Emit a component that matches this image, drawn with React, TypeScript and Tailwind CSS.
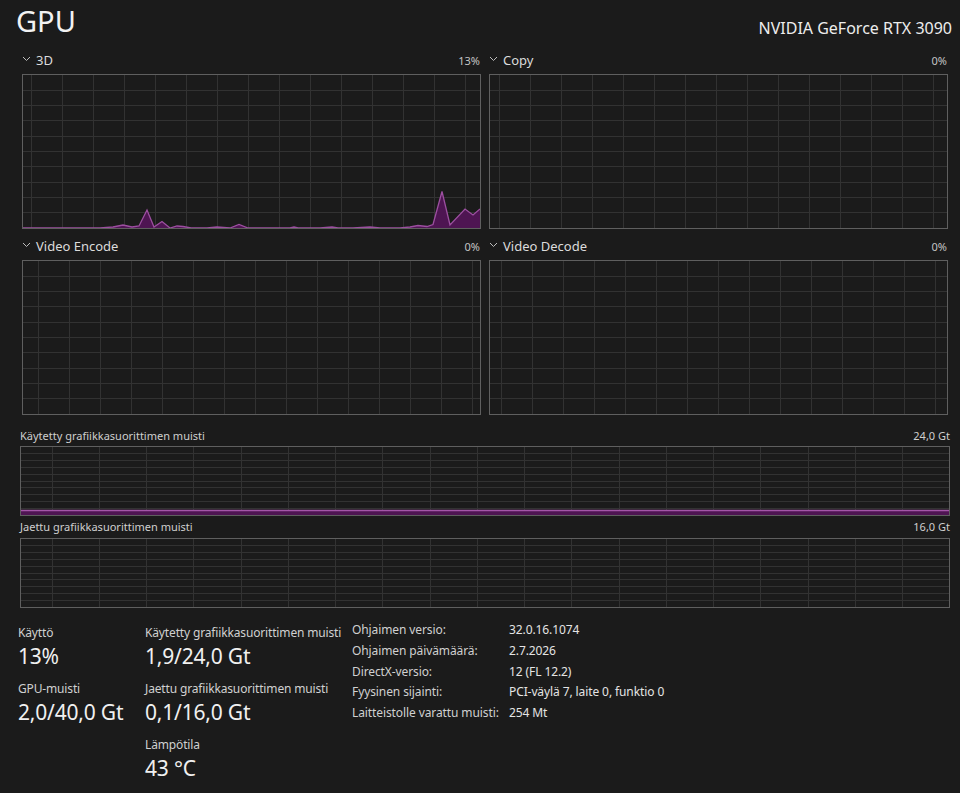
import React from "react";

// Task Manager style GPU performance page.

type Pt = [number, number];

const threeD: Pt[] = [
  [0, 153], [77, 153], [90, 152], [100, 150], [109, 152], [116, 151], [124, 135],
  [131, 152], [139, 146.5], [147, 153], [154, 151], [160, 151.5], [168, 153],
  [184, 153], [194, 152], [207, 153], [216, 149.5], [225, 153], [237, 153],
  [267, 153], [271, 152], [275, 153], [297, 153], [309, 152], [315, 153],
  [324, 153], [330, 153], [347, 152], [357, 153], [377, 153], [387, 152],
  [395, 150.5], [404, 151.5], [410, 149.5], [419, 116.5], [427, 150],
  [442, 134], [450, 140], [457, 134],
];

function Grid({ w, h, ox, sx, rows }: { w: number; h: number; ox: number; sx: number; rows: number }) {
  const xs: number[] = [];
  for (let x = ox; x < w; x += sx) xs.push(x);
  const ys: number[] = [];
  for (let i = 1; i < rows; i++) ys.push((h / rows) * i);
  return (
    <g stroke="#323232" strokeWidth={1} shapeRendering="crispEdges">
      {xs.map((x) => <line key={"x" + x} x1={x} y1={0} x2={x} y2={h} />)}
      {ys.map((y) => <line key={"y" + y} x1={0} y1={y} x2={w} y2={y} />)}
    </g>
  );
}

function Chevron() {
  return (
    <svg width="9" height="6" viewBox="0 0 9 6" className="mr-[5px] -mt-[4px]">
      <path d="M1 1 L4.5 4.5 L8 1" fill="none" stroke="#bdbdbd" strokeWidth="1" />
    </svg>
  );
}

function EngineChart({ label, value, ox, data }: { label: string; value: string; ox: number; data?: Pt[] }) {
  const w = 457;
  const h = 153;
  return (
    <div>
      <div className="flex items-center justify-between h-[28px] pt-[2px]">
        <div className="flex items-center text-[13px] text-[#dcdcdc]">
          <Chevron />
          {label}
        </div>
        <span className="text-[11px] text-[#c4c4c4] pr-[1px]">{value}</span>
      </div>
      <div className="h-[155px] border border-[#5f5f5f]">
        <svg width={w} height={h} viewBox={`0 0 ${w} ${h}`} className="block">
          <Grid w={w} h={h} ox={ox} sx={31} rows={10} />
          {data && (
            <>
              <polygon points={[...data, [w, h], [0, h]].map((p) => p.join(",")).join(" ")} fill="#4e1552" />
              <polyline points={data.map((p) => p.join(",")).join(" ")} fill="none" stroke="#9c4fa0" strokeWidth="1.3" />
            </>
          )}
        </svg>
      </div>
    </div>
  );
}

function MemoryChart({ label, value, used, head }: { label: string; value: string; used?: boolean; head: string }) {
  const w = 928;
  const h = 68;
  return (
    <div>
      <div className={`flex items-center justify-between text-[11px] text-[#cfcfcf] ${head}`}>
        <span>{label}</span>
        <span>{value}</span>
      </div>
      <div className="h-[70px] border border-[#5f5f5f]">
        <svg width={w} height={h} viewBox={`0 0 ${w} ${h}`} className="block">
          <Grid w={w} h={h} ox={31} sx={47.26} rows={10} />
          {used && (
            <>
              <rect x={0} y={63.5} width={w} height={4.5} fill="#4e1552" />
              <line x1={0} y1={63.5} x2={w} y2={63.5} stroke="#a456a8" strokeWidth="1.3" />
            </>
          )}
        </svg>
      </div>
    </div>
  );
}

function Stat({ label, value }: { label: string; value: string }) {
  return (
    <div className="mb-[10px]">
      <div className="h-[18px] leading-[18px] text-[12px] tracking-[-0.15px] text-[#d0d0d0] whitespace-nowrap">{label}</div>
      <div className="h-[28px] leading-[28px] text-[21px] tracking-[-0.2px] text-[#f0f0f0] whitespace-nowrap">{value}</div>
    </div>
  );
}

const props: [string, string][] = [
  ["Ohjaimen versio:", "32.0.16.1074"],
  ["Ohjaimen päivämäärä:", "2.7.2026"],
  ["DirectX-versio:", "12 (FL 12.2)"],
  ["Fyysinen sijainti:", "PCI-väylä 7, laite 0, funktio 0"],
  ["Laitteistolle varattu muisti:", "254 Mt"],
];

export default function App() {
  return (
    <div
      className="w-[960px] h-[793px] overflow-hidden bg-[#1b1b1b] text-[#e8e8e8]"
      style={{ fontFamily: '"Noto Sans", "Open Sans", sans-serif' }}
    >
      <header className="flex items-start justify-between h-[46px] pl-[16px] pr-[8px]">
        <h1 className="text-[29px] leading-none mt-[6px] text-[#f2f2f2]">GPU</h1>
        <div className="text-[16px] leading-none mt-[20px] text-[#ededed]">NVIDIA GeForce RTX 3090</div>
      </header>

      <div className="grid grid-cols-[459px_459px] gap-x-[8px] gap-y-[3px] pl-[22px]">
        <EngineChart label="3D" value="13%" ox={8} data={threeD} />
        <EngineChart label="Copy" value="0%" ox={9} />
        <EngineChart label="Video Encode" value="0%" ox={15} />
        <EngineChart label="Video Decode" value="0%" ox={11} />
      </div>

      <div className="w-[930px] ml-[20px] mt-[11px] flex flex-col">
        <MemoryChart label="Käytetty grafiikkasuorittimen muisti" value="24,0 Gt" used head="h-[20px]" />
        <MemoryChart label="Jaettu grafiikkasuorittimen muisti" value="16,0 Gt" head="h-[22px]" />
      </div>

      <div className="flex items-start pl-[18px] mt-[12px]">
        <div className="w-[127px] pt-[4px]">
          <Stat label="Käyttö" value="13%" />
          <Stat label="GPU-muisti" value="2,0/40,0 Gt" />
        </div>
        <div className="w-[207px] pt-[4px]">
          <Stat label="Käytetty grafiikkasuorittimen muisti" value="1,9/24,0 Gt" />
          <Stat label="Jaettu grafiikkasuorittimen muisti" value="0,1/16,0 Gt" />
          <Stat label="Lämpötila" value="43 °C" />
        </div>
        <div className="text-[12px] tracking-[-0.1px] text-[#d0d0d0]">
          {props.map(([k, v]) => (
            <div key={k} className="flex h-[20.7px] items-center">
              <span className="w-[157px] whitespace-nowrap">{k}</span>
              <span className="whitespace-nowrap text-[#e4e4e4]">{v}</span>
            </div>
          ))}
        </div>
      </div>
    </div>
  );
}
